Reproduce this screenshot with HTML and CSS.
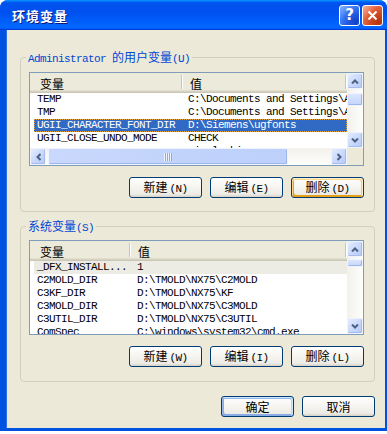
FILE: index.html
```html
<!DOCTYPE html>
<html lang="zh-Hans">
<head>
	<meta charset="UTF-8">
	<title>环境变量</title>
	<link rel="stylesheet" href="styles.css">
</head>
<body>
	<div class="window">
		<div class="titlebar">
			<span class="title">环境变量</span>
			<span class="tbtn help">?</span>
			<span class="tbtn close">
				<svg width="11" height="11" viewBox="0 0 11 11"><path d="M1.5 1.5 L9.5 9.5 M9.5 1.5 L1.5 9.5" stroke="#fff" stroke-width="2" fill="none"/></svg>
			</span>
		</div>
		<div class="client">
			<!-- 用户变量 -->
			<div class="group g1">
				<span class="legend"><span class="en">Administrator </span>的用户变量<span class="en">(U)</span></span>
				<div class="list l1">
					<div class="pane">
						<div class="header">
							<span class="h1">变量</span><span class="sep"></span>
							<span class="h2">值</span><span class="sep"></span>
						</div>
						<div class="row"><span class="c1">TEMP</span><span class="c2">C:\Documents and Settings\Administrator\Local Settings\Temp</span></div>
						<div class="row"><span class="c1">TMP</span><span class="c2">C:\Documents and Settings\Administrator\Local Settings\Temp</span></div>
						<div class="row sel"><span class="c1">UGII_CHARACTER_FONT_DIR</span><span class="c2">D:\Siemens\ugfonts</span></div>
						<div class="row"><span class="c1">UGII_CLOSE_UNDO_MODE</span><span class="c2">CHECK</span></div>
						<div class="row"><span class="c1"></span><span class="c2">simpl_chinese</span></div>
					</div>
					<div class="vscroll">
						<span class="sb"><svg width="8" height="5" viewBox="0 0 8 5"><path d="M1 4.5 L4 1.5 L7 4.5" stroke="#4d6185" stroke-width="2" fill="none"/></svg></span>
						<span class="thumb vt"></span>
						<span class="sb down"><svg width="8" height="5" viewBox="0 0 8 5"><path d="M1 0.5 L4 3.5 L7 0.5" stroke="#4d6185" stroke-width="2" fill="none"/></svg></span>
					</div>
					<div class="hscroll">
						<span class="sb"><svg width="5" height="8" viewBox="0 0 5 8"><path d="M4.5 1 L1.5 4 L4.5 7" stroke="#4d6185" stroke-width="2" fill="none"/></svg></span>
						<span class="thumb ht"><span class="grip"></span></span>
						<span class="sb right"><svg width="5" height="8" viewBox="0 0 5 8"><path d="M0.5 1 L3.5 4 L0.5 7" stroke="#4d6185" stroke-width="2" fill="none"/></svg></span>
					</div>
					<div class="corner"></div>
				</div>
				<div class="btnrow">
					<button type="button" class="btn">新建<span class="en">(N)</span></button>
					<button type="button" class="btn">编辑<span class="en">(E)</span></button>
					<button type="button" class="btn focus">删除<span class="en">(D)</span></button>
				</div>
			</div>
			<!-- 系统变量 -->
			<div class="group g2">
				<span class="legend">系统变量<span class="en">(S)</span></span>
				<div class="list l2">
					<div class="pane">
						<div class="header">
							<span class="h1">变量</span><span class="sep"></span>
							<span class="h2">值</span><span class="sep"></span>
						</div>
						<div class="row idle"><span class="c1">_DFX_INSTALL...</span><span class="c2">1</span></div>
						<div class="row"><span class="c1">C2MOLD_DIR</span><span class="c2">D:\TMOLD\NX75\C2MOLD</span></div>
						<div class="row"><span class="c1">C3KF_DIR</span><span class="c2">D:\TMOLD\NX75\KF</span></div>
						<div class="row"><span class="c1">C3MOLD_DIR</span><span class="c2">D:\TMOLD\NX75\C3MOLD</span></div>
						<div class="row"><span class="c1">C3UTIL_DIR</span><span class="c2">D:\TMOLD\NX75\C3UTIL</span></div>
						<div class="row"><span class="c1">ComSpec</span><span class="c2">C:\windows\system32\cmd.exe</span></div>
					</div>
					<div class="vscroll">
						<span class="sb"><svg width="8" height="5" viewBox="0 0 8 5"><path d="M1 4.5 L4 1.5 L7 4.5" stroke="#4d6185" stroke-width="2" fill="none"/></svg></span>
						<span class="thumb vt small"></span>
						<span class="sb down"><svg width="8" height="5" viewBox="0 0 8 5"><path d="M1 0.5 L4 3.5 L7 0.5" stroke="#4d6185" stroke-width="2" fill="none"/></svg></span>
					</div>
				</div>
				<div class="btnrow">
					<button type="button" class="btn">新建<span class="en">(W)</span></button>
					<button type="button" class="btn">编辑<span class="en">(I)</span></button>
					<button type="button" class="btn">删除<span class="en">(L)</span></button>
				</div>
			</div>
			<div class="actions">
				<button type="button" class="btn default">确定</button>
				<button type="button" class="btn">取消</button>
			</div>
		</div>
	</div>
</body>
</html>
```

FILE: styles.css
```css
body{margin:0;background:#fff;font-family:"Noto Sans CJK SC",sans-serif;font-size:12px;}
.en{font-family:"Liberation Mono",monospace;font-size:11px;letter-spacing:-0.6px;}

.window{width:387px;height:431px;display:flex;flex-direction:column;background:#0053e1;border-radius:8px 8px 0 0;overflow:hidden;}
.titlebar{height:30px;flex:none;display:flex;align-items:center;gap:2px;padding:0 4px 0 12px;background:linear-gradient(180deg,#0997ff 0%,#0053ee 9%,#0050ee 40%,#0066ff 86%,#0066ff 92%,#005bff 95%,#003dd7 97%,#003dd7 100%);}
.title{flex:1;color:#fff;font-weight:bold;font-size:13px;letter-spacing:1px;text-shadow:1px 1px #0a1a7c;}
.tbtn{width:21px;height:21px;box-sizing:border-box;border:1px solid #fff;border-radius:3px;display:flex;align-items:center;justify-content:center;}
.help{background:radial-gradient(circle at 85% 85%,#1440c8,transparent 65%),linear-gradient(135deg,#8ab4ff 0%,#3b7af4 40%,#1f5ee6 100%);color:#fff;font:bold 15px "DejaVu Sans",sans-serif;}
.close{background:radial-gradient(circle at 85% 85%,#b5340d,transparent 65%),linear-gradient(135deg,#f6b29a 0%,#e5643f 40%,#d24b22 100%);}

.client{flex:1;margin:0 2px 3px 6px;background:#ece9d8;padding:27px 10px 11px 14px;box-shadow:inset 1px 0 #2f6fe8;}

.group{position:relative;border:1px solid #d0d0bf;border-radius:4px;padding:14px 10px 13px 8px;}
.g2{margin-top:14px;padding-top:13px;padding-bottom:14px;}
.legend{position:absolute;top:-8px;left:5px;padding:0 2px;height:14px;line-height:14px;background:#ece9d8;color:#0046d5;}

.list{border:1px solid #7f9db9;background:#fff;display:grid;grid-template-columns:minmax(0,1fr) 16px;}
.l1{height:94px;box-sizing:border-box;grid-template-rows:minmax(0,1fr) 17px;}
.l2{height:95px;box-sizing:border-box;grid-template-rows:minmax(0,1fr);}
.pane{overflow:hidden;min-width:0;}
.header{display:flex;align-items:center;height:20px;background:#ebeadb;box-shadow:inset 0 -1px #cbc7b8,inset 0 -2px #d6d2c2,inset 0 -3px #e2decd;}
.h1{flex:none;box-sizing:border-box;padding-left:10px;}
.l1 .h1{width:151px;}
.l2 .h1{width:99px;}
.h2{flex:1;padding-left:7px;}
.sep{flex:none;width:1px;height:14px;margin-bottom:2px;background:#c7c5b2;border-right:1px solid #fff;}

.row{display:flex;height:13px;line-height:13px;margin-left:4px;white-space:nowrap;font-family:"Liberation Mono",monospace;font-size:11px;letter-spacing:-0.6px;color:#000;}
.c1{flex:none;box-sizing:border-box;padding-left:3px;overflow:hidden;}
.c2{flex:none;}
.l1 .c1{width:148px;}
.l1 .c2{padding-left:6px;}
.l2 .c1{width:95px;}
.l2 .c2{padding-left:8px;}
.row.sel{background:#316ac5;color:#fff;outline:1px dotted #e2a43c;outline-offset:-1px;}
.row.idle{background:#ecebe4;}

.vscroll{display:flex;flex-direction:column;background:linear-gradient(90deg,#f3f1ec,#fdfdfb);}
.hscroll{display:flex;min-width:0;background:linear-gradient(180deg,#f3f1ec,#fdfdfb);}
.sb{flex:none;width:16px;height:16px;box-sizing:border-box;border:1px solid #eef3fd;border-radius:2px;background:linear-gradient(135deg,#e4ecfe 0%,#c8d8fb 55%,#b5c9f5 100%);box-shadow:inset -1px -1px #a5bcec;display:flex;align-items:center;justify-content:center;}
.hscroll .sb{height:17px;}
.down{margin-top:auto;}
.right{margin-left:auto;}
.thumb{flex:none;box-sizing:border-box;border:1px solid #eef3fd;border-radius:2px;background:linear-gradient(90deg,#c9d8fc,#bcd0fa);box-shadow:inset -1px -1px #9db6ec;display:flex;align-items:center;justify-content:center;}
.vt{height:13px;margin-top:4px;background:linear-gradient(180deg,#dde6fe,#c3d4fb);}
.vt.small{height:8px;margin-top:2px;}
.ht{width:240px;margin-left:2px;}
.grip{width:8px;height:8px;background:repeating-linear-gradient(90deg,#eef4fe 0 1px,#8cacec 1px 2px);}
.corner{background:#ece9d8;}

.btnrow,.actions{display:flex;justify-content:flex-end;gap:8px;margin-top:11px;}
.actions{margin-top:14px;}
.btn{width:73px;height:21px;padding:0;border:1px solid #003c74;border-radius:3px;background:linear-gradient(180deg,#fff 0%,#f5f4ef 50%,#ecebe6 86%,#d6d0c5 100%);font-family:"Noto Sans CJK SC",sans-serif;font-size:12px;color:#000;line-height:17px;}
.btn .en{margin-left:2px;}
.btn.focus{box-shadow:inset -1px 1px #fff0cf,inset 1px 2px #fdd889,inset -2px 2px #fbc761,inset 2px -2px #e5a01a;}
.btn.default{box-shadow:inset -1px 1px #cee7ff,inset 1px 2px #98b8ea,inset -2px 2px #bcd4f6,inset 1px -1px #89ade4,inset 2px -2px #89ade4;}
```
